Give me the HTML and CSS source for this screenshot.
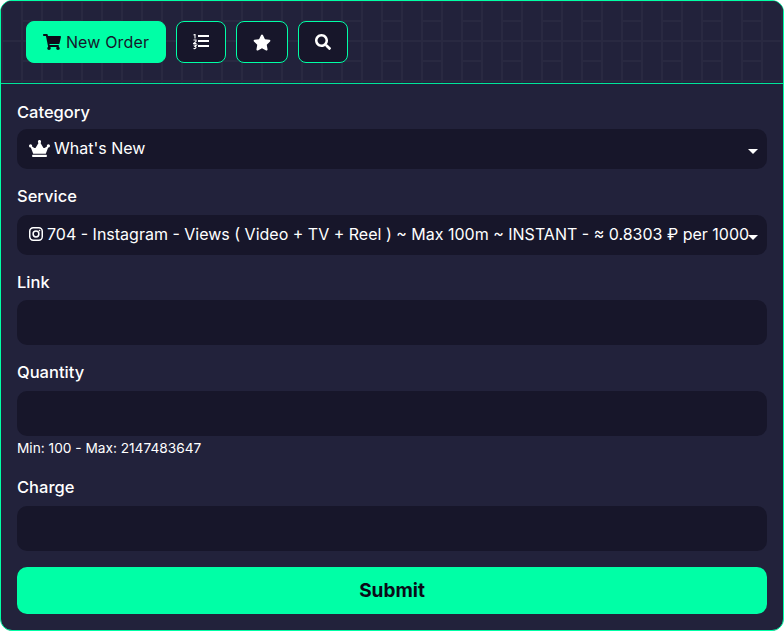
FILE: index.html
```html
<!DOCTYPE html>
<html lang="en">
<head>
  <meta charset="UTF-8" />
  <meta name="viewport" content="width=device-width, initial-scale=1.0" />
  <title>New Order</title>
  <link rel="stylesheet" href="styles.css">
</head>
<body>
  <div class="card">
    <div class="card-head">
      <a class="tab tab-active tab-order">
        <svg class="ico-cart" viewBox="0 0 576 512"><path d="M528 301l47-208c3-15-8-29-23-29H159l-9-47C148 7 138 0 127 0H24C11 0 0 11 0 24v16c0 13 11 24 24 24h70l70 343c-17 10-28 28-28 49 0 31 25 56 56 56s56-25 56-56c0-16-6-30-17-40h210c-11 10-17 24-17 40 0 31 25 56 56 56s56-25 56-56c0-22-13-41-32-51l5-24c3-15-8-29-23-29H212l-7-32h300c11 0 21-8 23-19z"/></svg>
        New Order
      </a>
      <a class="tab tab-list">
        <svg class="ico" width="16" height="16" viewBox="0 0 16 16"><rect x="5" y="1" width="11" height="2"/><rect x="5" y="6" width="11" height="2"/><rect x="5" y="11" width="11" height="2"/><path class="ico-digits" d="M.5 1L2 .5V4.5M.5 6H3V7.500L.5 9.500H3.500M.5 11H3.500L2 12.500C3.500 12.500 3.500 15 .5 14.500"/></svg>
      </a>
      <a class="tab tab-star">
        <svg class="ico" width="18" height="17" viewBox="0 0 576 512"><path d="M259 18l-65 132-146 21c-26 4-37 36-18 55l106 103-25 145c-5 26 23 46 46 34l131-69 131 69c23 12 51-8 46-34l-25-145 106-103c19-19 8-51-18-55l-146-21-65-132c-12-24-46-24-58 0z"/></svg>
      </a>
      <a class="tab tab-search">
        <svg class="ico" width="16" height="16" viewBox="0 0 512 512"><path d="M505 443L405 343c-4-4-10-7-17-7h-16c28-35 44-80 44-128C416 93 323 0 208 0S0 93 0 208s93 208 208 208c48 0 93-16 128-44v16c0 7 3 13 7 17l100 100c9 9 24 9 34 0l28-28c9-10 9-25 0-34zM208 336c-71 0-128-57-128-128S137 80 208 80s128 57 128 128-57 128-128 128z"/></svg>
      </a>
    </div>
    <form class="card-body">
      <div class="field field-category">
        <label class="field-label">Category</label>
        <div class="select">
          <svg class="ico-crown" viewBox="0 0 640 512"><path d="M528 448H112c-9 0-16 7-16 16v32c0 9 7 16 16 16h416c9 0 16-7 16-16v-32c0-9-7-16-16-16zm64-320c-26 0-48 22-48 48 0 7 2 14 4 20l-72 43c-15 9-35 4-44-12L351 85c11-9 17-22 17-37 0-27-21-48-48-48s-48 21-48 48c0 15 6 28 17 37l-81 142c-9 16-29 21-44 12l-72-43c3-6 4-13 4-20 0-26-21-48-48-48S0 150 0 176s21 48 48 48c3 0 5 0 8-1l72 193h384l72-193c3 1 5 1 8 1 26 0 48-22 48-48s-22-48-48-48z"/></svg>
          <span>What's New</span>
          <i class="caret"></i>
        </div>
      </div>
      <div class="field field-service">
        <label class="field-label">Service</label>
        <div class="select">
          <svg class="ico-insta" viewBox="0 0 14 14"><rect x="0.75" y="0.75" width="12.5" height="12.5" rx="3.4"/><circle cx="7" cy="7" r="2.9"/><circle class="dot" cx="10.5" cy="3.5" r="0.85"/></svg>
          <span class="service-text">704 - Instagram - Views ( Video + TV + Reel ) ~ Max 100m ~ INSTANT - ≈ 0.8303 ₽ per 1000</span>
          <i class="caret"></i>
        </div>
      </div>
      <div class="field field-link">
        <label class="field-label">Link</label>
        <input class="input" type="text">
      </div>
      <div class="field field-qty">
        <label class="field-label">Quantity</label>
        <input class="input" type="text">
        <small class="hint">Min: 100 - Max: 2147483647</small>
      </div>
      <div class="field field-charge">
        <label class="field-label">Charge</label>
        <input class="input" type="text">
      </div>
      <button class="submit" type="button">Submit</button>
    </form>
  </div>
</body>
</html>
```
FILE: styles.css
```css
* {
  box-sizing: border-box;
}
body {
  margin: 0;
  background: #fff;
  font-family: 'Inter', 'Liberation Sans', sans-serif;
  color: #fff;
}
.card {
  width: 784px;
  height: 631px;
  background: #22223b;
  border: 1px solid #00ffa6;
  border-radius: 12px;
  overflow: hidden;
}
.card-head {
  height: 83px;
  display: flex;
  align-items: flex-start;
  gap: 10px;
  padding: 20px 25px;
  border-bottom: 1px solid #00e59a;
  background-color: #22223b;
  background-image: url("data:image/svg+xml,%3Csvg xmlns='http://www.w3.org/2000/svg' width='40' height='40' fill='%23292941'%3E%3Crect x='0' width='2' height='40'/%3E%3Crect x='20' width='2' height='40'/%3E%3Crect y='39' width='40' height='1'/%3E%3Crect width='40' height='1'/%3E%3Crect x='20' y='19' width='20' height='2'/%3E%3C/svg%3E");
  background-size: 40px 40px;
}
.tab {
  height: 42px;
  display: flex;
  align-items: center;
  justify-content: center;
  background: #17162a;
  border: 1px solid #00ffa6;
  border-radius: 8px;
}
.tab-active {
  background: #00ffa6;
  color: #17162a;
  font-size: 16px;
  letter-spacing: 0.15px;
  gap: 5px;
}
.tab-order { width: 140px; }
.tab-list { width: 50px; }
.tab-star { width: 52px; }
.tab-search { width: 50px; }
.ico { fill: #fff; }
.ico-digits {
  fill: none;
  stroke: #fff;
  stroke-width: 1.1;
}
.ico-cart { width: 18px; height: 16px; fill: #0b0b18; }
.card-body {
  padding: 17px 16px 0;
}
.field-label {
  display: block;
  font-size: 16.5px;
  font-weight: 500;
  line-height: 22px;
  margin-bottom: 8px;
}
.field-category .field-label { margin-bottom: 6px; }
.field-link .field-label { margin-bottom: 7px; }
.field-category { margin-bottom: 16px; }
.field-service { margin-bottom: 16px; }
.field-link { margin-bottom: 16px; }
.field-qty { margin-bottom: 18px; }
.field-charge { margin-bottom: 16px; }
.select {
  position: relative;
  height: 40px;
  display: flex;
  align-items: center;
  gap: 4px;
  padding: 0 12px 2px;
  background: #17162a;
  border-radius: 10px;
  font-size: 16px;
  white-space: nowrap;
  overflow: hidden;
}
.ico-crown { width: 21px; height: 17px; fill: #fff; }
.ico-insta { width: 14px; height: 14px; fill: none; stroke: #fff; stroke-width: 1.5; }
.ico-insta .dot { fill: #fff; stroke: none; }
.caret {
  position: absolute;
  right: 9px;
  top: 20px;
  border-left: 5px solid transparent;
  border-right: 5px solid transparent;
  border-top: 5px solid #fff;
}
.input {
  display: block;
  width: 100%;
  height: 45px;
  background: #17162a;
  border: none;
  border-radius: 10px;
}
.hint {
  display: block;
  font-size: 13.7px;
  line-height: 20px;
  margin-top: 2px;
}
.submit {
  display: block;
  width: 100%;
  height: 47px;
  background: #00ffa6;
  color: #0b0b18;
  border: none;
  border-radius: 10px;
  font-family: inherit;
  font-size: 19px;
  font-weight: 700;
}
```
